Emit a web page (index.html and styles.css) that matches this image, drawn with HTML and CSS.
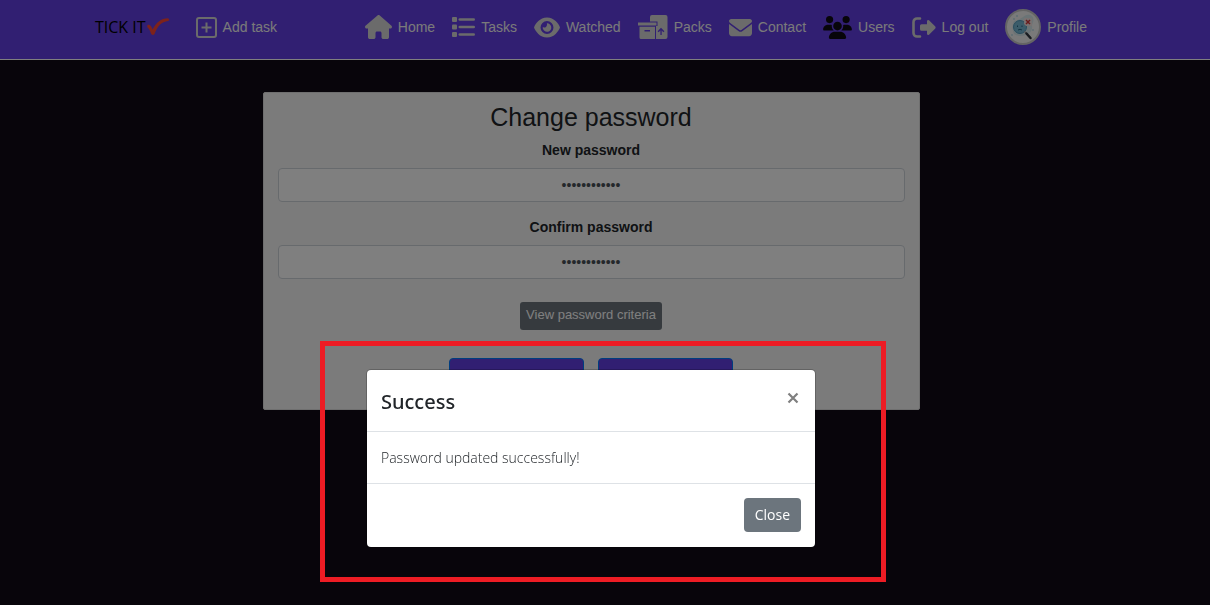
FILE: index.html
```html
<!DOCTYPE html>
<html lang="en">
<head>
<meta charset="utf-8">
<meta name="viewport" content="width=device-width, initial-scale=1">
<title>Tick It - Change password</title>
<link rel="stylesheet" href="styles.css">
</head>
<body>
<header class="topbar">
  <div class="topbar-inner">
    <a class="logo" href="#">TICK IT<svg width="24" height="20" viewBox="0 0 24 20"><path d="M1.500 8C3.500 7 5.500 9 6.500 12.500C10 6 15 1.200 22 1.200C23.500 2 23.500 3.500 22 3.900C15.500 4.500 11.500 9 8.500 17C7.500 18.500 5.500 18 5 16.500C4 13.500 3 11.500 1.200 10Z" fill="#fb4536"/></svg></a>
    <a class="nav-item" href="#"><svg width="21" height="21" viewBox="0 0 21 21" fill="none" stroke="currentColor"><rect x="1" y="1" width="19" height="19" rx="2" stroke-width="2"/><path d="M10.500 5.500v10M5.500 10.500h10" stroke-width="2"/></svg><span>Add task</span></a>
    <nav class="nav">
      <a class="nav-item" href="#"><svg width="27" height="24" viewBox="0 0 576 512" fill="currentColor"><path d="M575.8 255.500c0 18-15 32.100-32 32.100h-32l.7 160.200c0 2.700-.2 5.400-.5 8.100V472c0 22.100-17.900 40-40 40H392c-22.100 0-40-17.900-40-40V384c0-17.700-14.300-32-32-32H256c-17.700 0-32 14.300-32 32v88c0 22.100-17.900 40-40 40H104c-22.100 0-40-17.900-40-40V287.600H32c-18 0-32-14-32-32.100c0-9 3-17 10-24L266.400 8c7-7 15-8 22-8s15 2 21 7L564.800 231.500c8 7 12 15 11 24z"/></svg><span>Home</span></a>
      <a class="nav-item" href="#"><svg width="23" height="20" viewBox="0 0 23 20" fill="currentColor"><rect width="5" height="5" rx="1"/><rect y="7.500" width="5" height="5" rx="1"/><rect y="15" width="5" height="5" rx="1"/><rect x="6.500" y="1.200" width="16.500" height="2.600" rx="1.300"/><rect x="6.500" y="8.700" width="16.500" height="2.600" rx="1.300"/><rect x="6.500" y="16.200" width="16.500" height="2.600" rx="1.300"/></svg><span>Tasks</span></a>
      <a class="nav-item" href="#"><svg width="26" height="23" viewBox="0 0 576 512" fill="currentColor"><path d="M288 32c-80.800 0-145.500 36.800-192.600 80.600C48.600 156 17.300 208 2.500 243.700c-3.300 7.900-3.300 16.700 0 24.600C17.300 304 48.600 356 95.400 399.400C142.500 443.200 207.200 480 288 480s145.500-36.800 192.600-80.600c46.800-43.500 78.100-95.400 93-131.100c3.300-7.900 3.300-16.700 0-24.600c-14.900-35.700-46.200-87.700-93-131.100C433.500 68.800 368.800 32 288 32zM144 256a144 144 0 1 1 288 0 144 144 0 1 1 -288 0zm144-64c0 35.300-28.700 64-64 64c-7.100 0-13.900-1.200-20.300-3.300c-5.500-1.800-11.900 1.600-11.700 7.400c.3 6.900 1.300 13.800 3.200 20.700c13.700 51.200 66.400 81.600 117.600 67.900s81.600-66.400 67.900-117.600c-11.100-41.500-47.800-69.400-88.600-71.100c-5.800-.2-9.200 6.100-7.400 11.700c2.100 6.400 3.300 13.200 3.300 20.300z"/></svg><span>Watched</span></a>
      <a class="nav-item" href="#"><svg width="30" height="24" viewBox="0 0 30 24" fill="currentColor"><path fill-rule="evenodd" d="M14 0H27.500A2 2 0 0 1 29.500 2V22A2 2 0 0 1 27.500 24H18V11H19.500V6.500H12V2A2 2 0 0 1 14 0ZM22.400 20V15.500L20.600 17.200L19.600 16.200L23 12.800L26.400 16.200L25.400 17.200L23.700 15.500V20Z"/><path d="M0 7.500H18.500V10.500H0Z"/><path fill-rule="evenodd" d="M1.500 11.800H17V24H3A1.500 1.500 0 0 1 1.500 22.500ZM6.500 15V16.400H12V15Z"/></svg><span>Packs</span></a>
      <a class="nav-item" href="#"><svg width="23" height="23" viewBox="0 0 512 512" fill="currentColor"><path d="M48 64C21.500 64 0 85.500 0 112c0 15.100 7.100 29.300 19.200 38.400L236.800 313.600c11.400 8.500 27 8.500 38.400 0L492.800 150.400c12.100-9.100 19.200-23.300 19.200-38.400c0-26.500-21.500-48-48-48H48zM0 176V384c0 35.300 28.700 64 64 64H448c35.300 0 64-28.700 64-64V176L294.400 339.200c-22.800 17.100-54 17.100-76.800 0L0 176z"/></svg><span>Contact</span></a>
      <a class="nav-item" href="#"><svg width="29" height="23" viewBox="0 0 640 512" fill="#0f0a14"><path d="M144 0a80 80 0 1 1 0 160A80 80 0 1 1 144 0zM512 0a80 80 0 1 1 0 160A80 80 0 1 1 512 0zM0 298.700C0 239.800 47.800 192 106.700 192h42.700c15.900 0 31 3.500 44.600 9.700c-1.300 7.200-1.900 14.700-1.900 22.300c0 38.200 16.800 72.500 43.300 96H21.300C9.600 320 0 310.400 0 298.700zM405.300 320c25.900-23.500 42.600-57.800 42.600-96c0-7.600-.7-15-1.900-22.300c13.600-6.300 28.700-9.700 44.600-9.700h42.700C592.200 192 640 239.800 640 298.700c0 11.800-9.600 21.300-21.300 21.300H405.300zM224 224a96 96 0 1 1 192 0 96 96 0 1 1 -192 0zM128 485.300C128 411.700 187.700 352 261.300 352H378.700C452.300 352 512 411.700 512 485.300c0 14.700-11.900 26.700-26.700 26.700H154.700c-14.700 0-26.700-11.900-26.700-26.700z"/></svg><span>Users</span></a>
      <a class="nav-item" href="#"><svg width="24" height="21" viewBox="0 0 24 21" fill="currentColor"><path d="M8 1.500H5A3.500 3.500 0 0 0 1.500 5V16A3.500 3.500 0 0 0 5 19.500H8" fill="none" stroke="currentColor" stroke-width="2.600" stroke-linecap="round"/><path d="M9.500 7.300H15V4Q15.500 2.500 17 3.300L23.300 9.500Q24 10.500 23.300 11.500L17 17.700Q15.500 18.500 15 17V13.700H9.500Q8 13.700 8 12.200V8.800Q8 7.300 9.500 7.300Z"/></svg><span>Log out</span></a>
      <a class="nav-item" href="#"><svg width="36" height="36" viewBox="0 0 36 36"><circle cx="18" cy="18" r="17" fill="#f4f4f4" stroke="#c8c8c8" stroke-width="2"/><path d="M9 12Q14 11 18 8Q23 4 27 7Q30 10 27 16Q28 22 23 25Q15 29 9 25Q6 18 9 12Z" fill="#d6e8ed"/><circle cx="15" cy="18" r="6.500" fill="#76b8d4" stroke="#559bbd"/><path d="M12.500 16.500v1.500M17 16.500v1.500" stroke="#296785"/><path d="M13 21Q15 19.500 17 21" stroke="#296785" fill="none"/><path d="M19.500 22.500l2 2" stroke="#aaa" stroke-width="1.500"/><path d="M21.500 24.500l4 4.500" stroke="#333840" stroke-width="2.500" stroke-linecap="round"/><path d="M19 9h8v8h-6l-2-2z" fill="#eee3e3"/><path d="M21 11l4 4M25 11l-4 4" stroke="#d4373b" stroke-width="1.500"/><g fill="#80c2d8"><circle cx="9" cy="10" r=".7"/><circle cx="12" cy="7" r=".7"/><circle cx="7" cy="26" r=".7"/><circle cx="28" cy="21" r=".7"/></g></svg><span>Profile</span></a>
    </nav>
  </div>
</header>
<main class="page">
  <form class="card">
    <h1 class="card-title">Change password</h1>
    <div class="field">
      <label for="new-password">New password</label>
      <input id="new-password" type="password" value="tickit123456" autocomplete="new-password">
    </div>
    <div class="field">
      <label for="confirm-password">Confirm password</label>
      <input id="confirm-password" type="password" value="tickit123456" autocomplete="new-password">
    </div>
    <button class="criteria" type="button">View password criteria</button>
    <div class="actions">
      <button class="action" type="button" aria-label="Save"></button>
      <button class="action" type="button" aria-label="Cancel"></button>
    </div>
  </form>
</main>
<div class="backdrop">
  <section class="modal" role="dialog" aria-labelledby="modal-title">
    <div class="modal-header">
      <h2 id="modal-title">Success</h2>
      <button class="dismiss" type="button" aria-label="Dismiss"><svg width="12" height="12" viewBox="0 0 12 12"><path d="M1.500 1.500l9 9M10.500 1.500l-9 9" stroke="#7f7f7f" stroke-width="2.200"/></svg></button>
    </div>
    <p class="modal-body">Password updated successfully!</p>
    <div class="modal-footer"><button class="close" type="button">Close</button></div>
    <div class="highlight"></div>
  </section>
</div>
</body>
</html>
```
FILE: styles.css
```css
* { box-sizing: border-box; }
body {
  margin: 0;
  min-height: 100vh;
  background: #100b16;
  color: #212529;
  font: 14px/20px "Liberation Sans", Arial, sans-serif;
}
svg { display: block; flex: none; }
button, input { font: inherit; }
.topbar {
  padding: 9px 28px 14px 0;
  background: #623ee4;
  border-bottom: 1px solid #fff;
}
.topbar-inner {
  display: flex;
  align-items: center;
  max-width: 992px;
  margin: 0 auto;
}
.logo {
  display: flex;
  align-items: center;
  margin-right: 26px;
  color: #000;
  font-family: "Open Sans", "Noto Sans", sans-serif;
  font-size: 16px;
  text-decoration: none;
  white-space: nowrap;
}
.nav {
  display: flex;
  align-items: center;
  gap: 17px;
  margin-left: auto;
}
.nav-item {
  display: flex;
  align-items: center;
  gap: 6px;
  color: #d6d6d6;
  text-decoration: none;
  white-space: nowrap;
}
.nav-item span { color: #f4f4f4; }
.page { padding: 32px 28px 32px 0; }
.card {
  display: flex;
  flex-direction: column;
  align-items: center;
  max-width: 657px;
  margin: 0 auto;
  padding: 8px 14px 17px;
  background: #f7f7f7;
  border: 1px solid #dfdfdf;
  border-radius: 2px;
}
.card-title {
  margin: 0 0 7px;
  font-size: 25px;
  font-weight: 400;
  line-height: 32px;
}
.field {
  display: flex;
  flex-direction: column;
  gap: 8px;
  align-self: stretch;
  margin-bottom: 15px;
}
.field label { font-weight: 700; text-align: center; }
.field input {
  height: 34px;
  padding: 6px 12px;
  background: #fff;
  border: 1px solid #ced4da;
  border-radius: 4px;
  color: #495057;
  text-align: center;
}
.criteria {
  height: 28px;
  margin: 8px 0 28px;
  padding: 0 6px 2px;
  background: #6c757d;
  border: 0;
  border-radius: 3px;
  color: #fff;
  font-size: 13px;
}
.actions { display: flex; gap: 14px; }
.action {
  width: 135px;
  height: 34px;
  background: #623ee4;
  border: 1px solid #007bff;
  border-radius: 4px;
}
.backdrop {
  position: fixed;
  inset: 0;
  padding: 370px 28px 0 0;
  background: rgba(0, 0, 0, 0.5);
}
.modal {
  position: relative;
  max-width: 448px;
  margin: 0 auto;
  background: #fff;
  border-radius: 4px;
  box-shadow: 0 0 0 1px rgba(0, 0, 0, 0.2);
  font-family: "Open Sans", "Noto Sans", sans-serif;
}
.modal-header {
  display: flex;
  justify-content: space-between;
  align-items: flex-start;
  padding: 16px 14px 13px;
  border-bottom: 1px solid #dee2e6;
}
.modal-header h2 {
  margin: 0;
  font-family: "Noto Sans", sans-serif;
  font-size: 20px;
  font-weight: 500;
  line-height: 32px;
}
.dismiss {
  padding: 6px 2px;
  background: none;
  border: 0;
}
.modal-body { margin: 0; padding: 16px 14px 15px; font-weight: 300; }
.modal-footer {
  display: flex;
  justify-content: flex-end;
  padding: 14px 14px 15px;
  border-top: 1px solid #dee2e6;
}
.close {
  height: 34px;
  padding: 0 11px;
  background: #6c757d;
  border: 0;
  border-radius: 4px;
  color: #fff;
}
.highlight {
  position: absolute;
  inset: -29px -71px -35px -47px;
  border: 5px solid #ed1c24;
  pointer-events: none;
}
```
